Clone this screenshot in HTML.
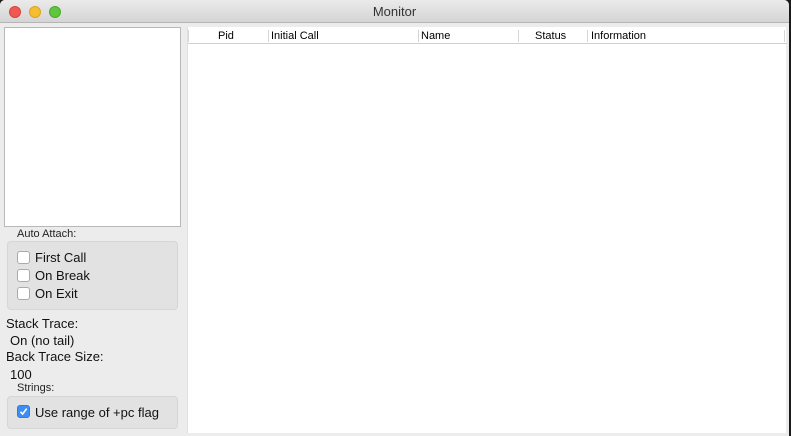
<!DOCTYPE html>
<html><head><style>
*{margin:0;padding:0;box-sizing:border-box}
body{width:791px;height:436px;background:#1a1a1a;font-family:"Liberation Sans",sans-serif;overflow:hidden;position:relative}
.win{position:absolute;left:0;top:0;width:789px;height:436px;background:#ececec;border-radius:5px 5px 0 0;overflow:hidden}
.title{position:absolute;left:0;top:0;width:789px;height:23px;background:linear-gradient(#ebebeb,#d5d5d5);border-bottom:1px solid #b5b5b5;text-align:center;font-size:13px;line-height:24px;color:#333}
.dot{position:absolute;top:6px;width:12px;height:12px;border-radius:50%}
.abs{position:absolute}
.list{left:4px;top:27px;width:177px;height:200px;background:#fff;border:1px solid #b8b8b8}
.tbl{left:187px;top:27px;width:599px;height:406px;background:#fff;border-left:1px solid #e0e0e0}
.hdr{left:0;top:0;width:599px;height:17px;border-bottom:1px solid #d0d0d0;font-size:11px;line-height:19px;color:#000}
.hdr span{position:absolute;top:0}
.sep{position:absolute;top:3px;width:1px;height:12px;background:#d6d6d6}
.lbl{font-size:11px;color:#222}
.box{background:#e2e2e2;border:1px solid #d6d6d6;border-radius:4px}
.cb{position:absolute;width:13px;height:13px;background:#fff;border:1px solid #aaa;border-radius:3px}
.t{font-size:13px;color:#111;position:absolute}
</style></head><body>
<div class="win">
<div class="title">Monitor
<div class="dot" style="left:9px;background:#ee5a52;border:1px solid #d9443c"></div>
<div class="dot" style="left:29px;background:#f5bd30;border:1px solid #dea224"></div>
<div class="dot" style="left:49px;background:#5fc63f;border:1px solid #4aa92e"></div>
</div>
<div class="abs list"></div>
<div class="abs tbl">
<div class="abs hdr">
<div class="sep" style="left:0"></div>
<span style="left:30px">Pid</span>
<div class="sep" style="left:80px"></div>
<span style="left:83px">Initial Call</span>
<div class="sep" style="left:230px"></div>
<span style="left:233px">Name</span>
<div class="sep" style="left:330px"></div>
<span style="left:347px">Status</span>
<div class="sep" style="left:399px"></div>
<span style="left:403px">Information</span>
<div class="sep" style="left:596px"></div>
</div>
</div>
<div class="abs lbl" style="left:17px;top:228px">Auto Attach:</div>
<div class="abs box" style="left:7px;top:241px;width:171px;height:69px"></div>
<div class="cb" style="left:17px;top:251px"></div><div class="t" style="left:35px;top:250px">First Call</div>
<div class="cb" style="left:17px;top:269px"></div><div class="t" style="left:35px;top:268px">On Break</div>
<div class="cb" style="left:17px;top:287px"></div><div class="t" style="left:35px;top:286px">On Exit</div>
<div class="t" style="left:6px;top:316px">Stack Trace:</div>
<div class="t" style="left:10px;top:333px">On (no tail)</div>
<div class="t" style="left:6px;top:349px">Back Trace Size:</div>
<div class="t" style="left:10px;top:367px">100</div>
<div class="abs lbl" style="left:17px;top:382px">Strings:</div>
<div class="abs box" style="left:7px;top:396px;width:171px;height:33px"></div>
<div class="cb" style="left:17px;top:405px;background:#3d8df5;border-color:#2f7de0"><svg width="11" height="11" viewBox="0 0 11 11" style="position:absolute;left:0;top:0"><path d="M2.5 5.8 L4.6 8 L8.7 2.6" stroke="#fff" stroke-width="1.6" fill="none"/></svg></div>
<div class="t" style="left:35px;top:405px">Use range of +pc flag</div>
</div>
<div class="abs" style="left:789px;top:0;width:2px;height:436px;background:#1a1a1a"></div>
</body></html>
